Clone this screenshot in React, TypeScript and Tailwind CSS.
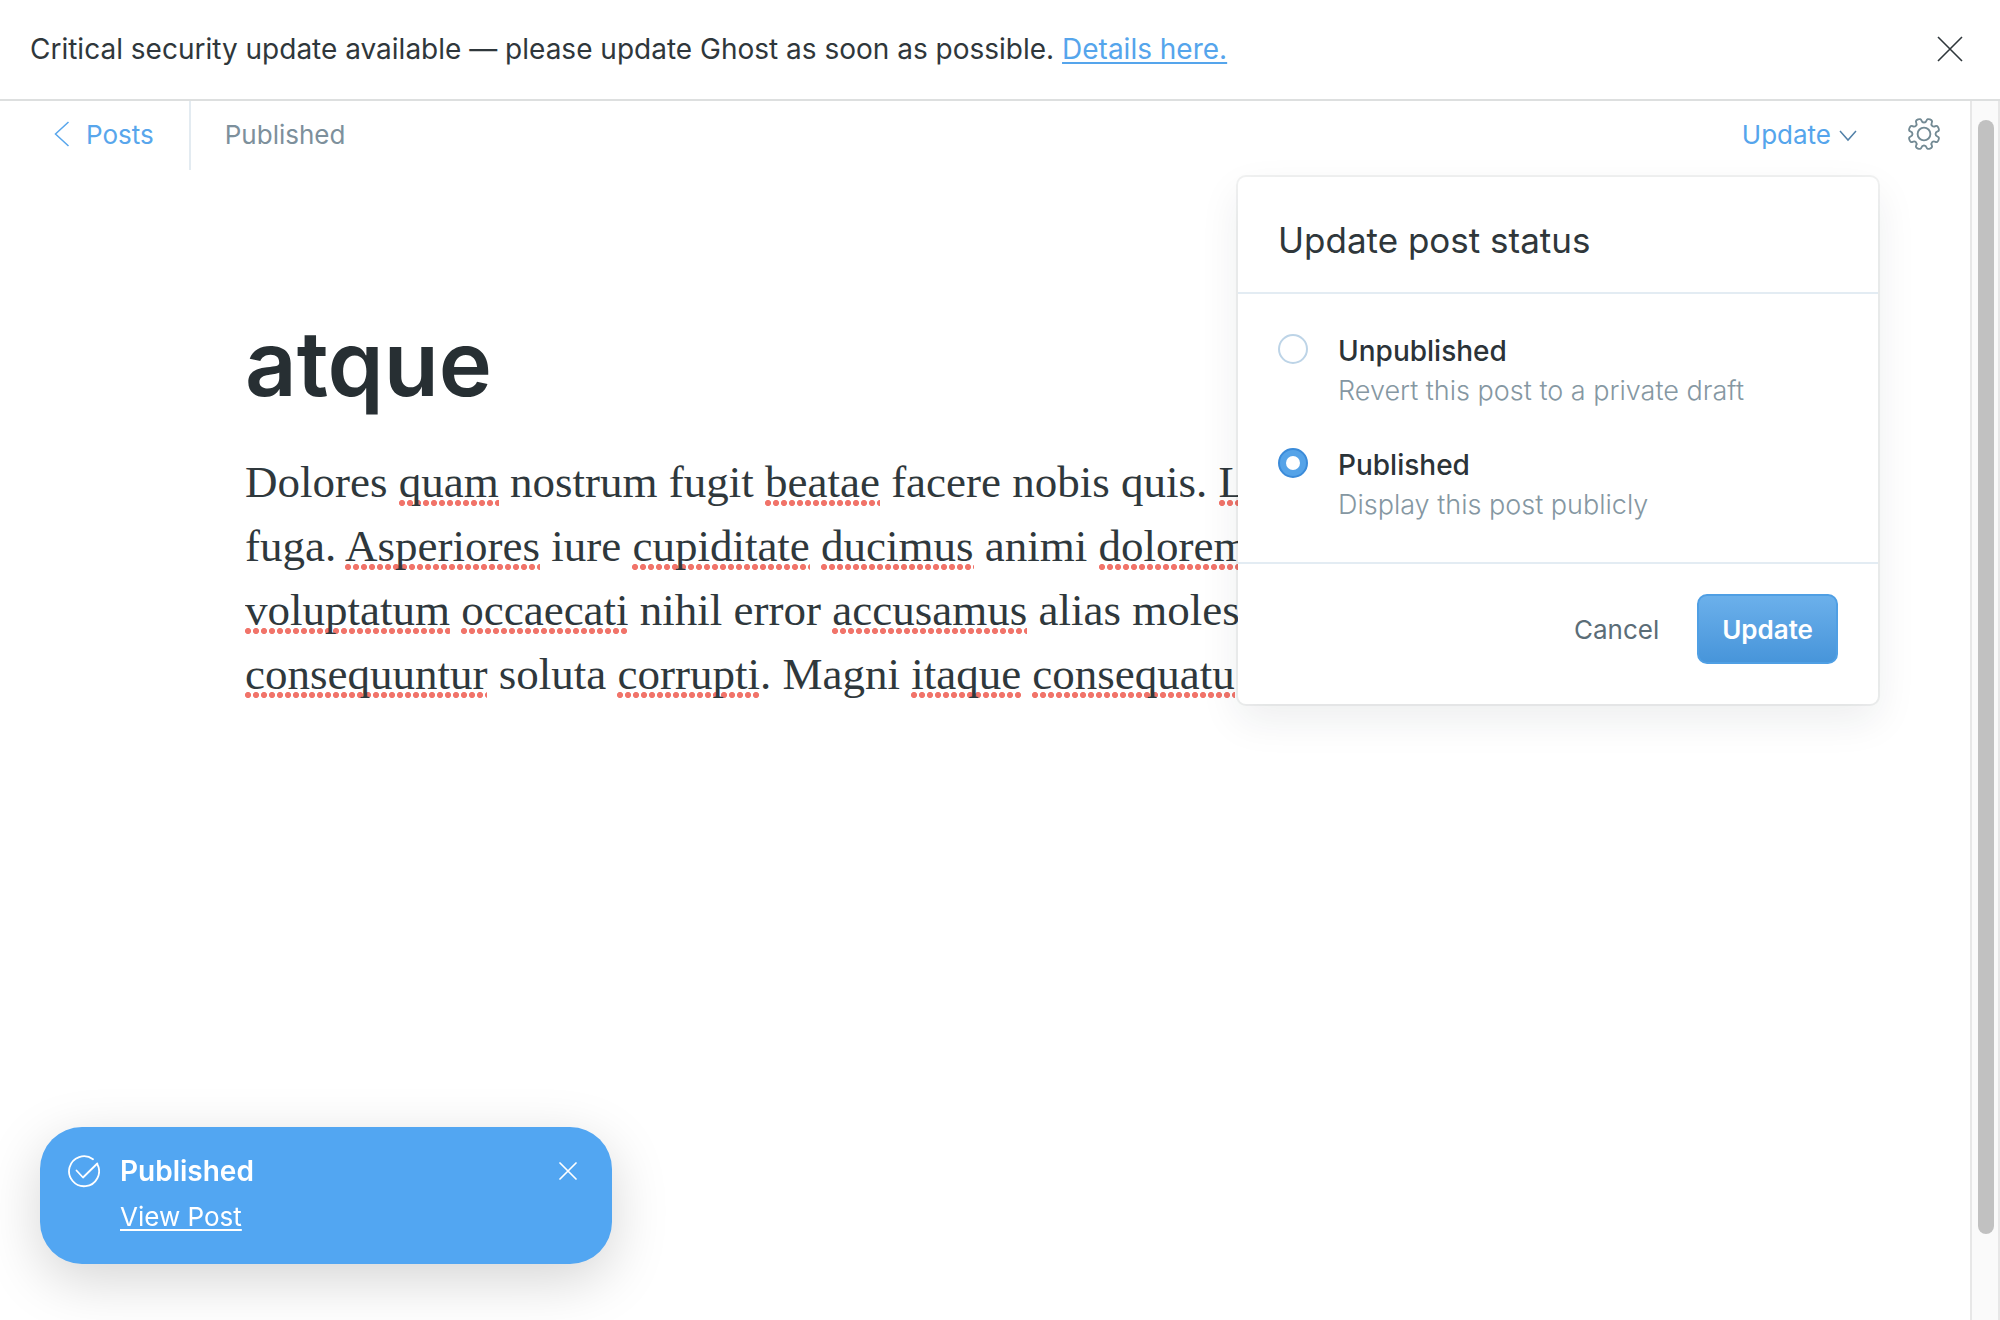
import React, { useState } from "react";

function polar(angle: number, radius: number) {
  const rad = (angle * Math.PI) / 180;
  return [17 + radius * Math.cos(rad), 17 + radius * Math.sin(rad)];
}

// Eight soft teeth: corner points are rounded by running curves between edge midpoints.
function gearPath() {
  const points: number[][] = [];
  for (let i = 0; i < 8; i++) {
    const a = i * 45 + 22.5;
    points.push(polar(a - 11, 17), polar(a + 11, 17), polar(a + 13, 12.4), polar(a + 32, 12.4));
  }
  const mid = (p: number[], q: number[]) => `${((p[0] + q[0]) / 2).toFixed(2)} ${((p[1] + q[1]) / 2).toFixed(2)}`;
  let d = `M${mid(points[points.length - 1], points[0])}`;
  points.forEach((p, i) => {
    d += `Q${p[0].toFixed(2)} ${p[1].toFixed(2)} ${mid(p, points[(i + 1) % points.length])}`;
  });
  return d + "Z";
}

function GearIcon() {
  return (
    <svg width="32" height="32" viewBox="0 0 34 34" fill="none" stroke="#738a94" strokeWidth="2" className="overflow-visible" aria-hidden="true">
      <path d={gearPath()} />
      <circle cx="17" cy="17" r="6.8" />
    </svg>
  );
}

function Misspelled({ children }: { children: React.ReactNode }) {
  return (
    <span className="bg-[radial-gradient(circle_at_3px_3px,#f1746a_2.7px,transparent_3.4px)] bg-[length:8px_7px] bg-[position:0_100%] bg-repeat-x">
      {children}
    </span>
  );
}

type StatusOptionProps = {
  id: string;
  title: string;
  description: string;
  checked: boolean;
  onSelect: () => void;
};

function StatusOption({ id, title, description, checked, onSelect }: StatusOptionProps) {
  return (
    <label htmlFor={id} className="flex cursor-pointer items-start gap-[30px]">
      <input
        id={id}
        type="radio"
        name="post-status"
        checked={checked}
        onChange={onSelect}
        className="mt-[3px] grid size-[30px] shrink-0 cursor-pointer appearance-none place-content-center rounded-full border-2 border-[#bdd4e7] bg-white before:size-3.5 before:rounded-full before:bg-white checked:border-[#3b8bd9] checked:bg-[#55a3e8]"
      />
      <span className="flex flex-col leading-10">
        <span className="text-[28px] font-medium text-[#2b3338]">{title}</span>
        <span className="text-[27px] font-light text-[#8597a2]">{description}</span>
      </span>
    </label>
  );
}

function UpdatePopover() {
  const [status, setStatus] = useState("published");
  return (
    <section
      aria-label="Update post status"
      className="absolute top-[76px] right-[92px] z-10 w-[640px] rounded-lg bg-white shadow-[0_0_0_2px_rgba(60,70,75,0.07),0_16px_40px_rgba(27,39,51,0.08)]"
    >
      <h2 className="border-b-2 border-[#e3ecf3] px-10 pt-10 pb-[29px] text-[35px] leading-[46px] text-[#2f373b]">
        Update post status
      </h2>
      <div role="radiogroup" aria-label="Post status" className="flex flex-col gap-[34px] px-10 py-[37px]">
        <StatusOption
          id="status-unpublished"
          title="Unpublished"
          description="Revert this post to a private draft"
          checked={status === "unpublished"}
          onSelect={() => setStatus("unpublished")}
        />
        <StatusOption
          id="status-published"
          title="Published"
          description="Display this post publicly"
          checked={status === "published"}
          onSelect={() => setStatus("published")}
        />
      </div>
      <div className="flex items-center justify-end gap-[38px] border-t-2 border-[#e3ecf3] px-10 pt-[30px] pb-10 text-[26px]">
        <button type="button" className="text-[#5b6d77]">
          Cancel
        </button>
        <button
          type="button"
          className="h-[70px] rounded-[10px] border-2 border-[#4f9fe4] bg-linear-to-b from-[#6bb0eb] to-[#4795da] px-[23px] font-semibold text-white"
        >
          Update
        </button>
      </div>
    </section>
  );
}

function EditorHeader() {
  return (
    <header className="relative flex h-[66px] items-center text-[26px]">
      <a href="#posts" className="flex items-center gap-4 pl-[54px] text-[#58a6ec]">
        <svg width="16" height="26" viewBox="0 0 16 26" fill="none" stroke="currentColor" strokeWidth="1.5" aria-hidden="true">
          <path d="M14.5 1 1.5 13l13 12" />
        </svg>
        Posts
      </a>
      <div className="ml-[35px] h-[69px] w-0.5 self-start bg-[#e3ebf1]" />
      <span className="ml-[34px] text-[#7d909c]">Published</span>
      <button type="button" className="ml-auto flex items-center gap-2 text-[#55a5ec]" aria-expanded="true">
        <span>Update</span>
        <svg width="18" height="12" viewBox="0 0 18 12" fill="none" stroke="#5180a8" strokeWidth="1.5" className="mt-1" aria-hidden="true">
          <path d="m1 1 8 9 8-9" />
        </svg>
      </button>
      <button type="button" className="mr-[30px] ml-[51px]" aria-label="Post settings">
        <GearIcon />
      </button>
      <UpdatePopover />
    </header>
  );
}

function Editor() {
  return (
    <article className="mx-auto w-full max-w-[1480px] pt-[142px]">
      <h1 className="text-[90px] leading-[110px] font-semibold text-[#272f33]">atque</h1>
      <p className="mt-[31px] overflow-hidden font-['Liberation_Serif',serif] text-[45px] leading-[64px] whitespace-nowrap text-[#2f383c]">
        Dolores <Misspelled>quam</Misspelled> nostrum fugit <Misspelled>beatae</Misspelled> facere nobis quis.{" "}
        <Misspelled>La</Misspelled>
        <br />
        fuga. <Misspelled>Asperiores</Misspelled> iure <Misspelled>cupiditate</Misspelled>{" "}
        <Misspelled>ducimus</Misspelled> animi <Misspelled>dolorem</Misspelled>
        <br />
        <Misspelled>voluptatum</Misspelled> <Misspelled>occaecati</Misspelled> nihil error{" "}
        <Misspelled>accusamus</Misspelled> alias molest
        <br />
        <Misspelled>consequuntur</Misspelled> soluta <Misspelled>corrupti</Misspelled>. Magni{" "}
        <Misspelled>itaque</Misspelled> <Misspelled>consequatu</Misspelled>
      </p>
    </article>
  );
}

function Toast() {
  return (
    <aside
      role="status"
      className="fixed bottom-14 left-10 flex w-[572px] items-start rounded-[42px] bg-[#52a6f2] pt-[26px] pr-[35px] pb-[29px] pl-7 text-white shadow-[0_16px_56px_rgba(0,0,0,0.17)]"
    >
      <svg width="32" height="36" viewBox="0 0 32 36" fill="none" stroke="currentColor" strokeWidth="1.8" strokeLinecap="round" strokeLinejoin="round" aria-hidden="true">
        <path d="M25 6.2A15 15 0 1 0 29.3 11.2" />
        <path d="M8.5 17.5 15 24.5 29.3 10.5" />
      </svg>
      <div className="ml-5 flex grow flex-col items-start gap-2.5 leading-9">
        <span className="text-[28px] font-semibold">Published</span>
        <a href="#view" className="text-[26px] underline decoration-2 underline-offset-3">
          View Post
        </a>
      </div>
      <button type="button" className="flex h-9 items-center" aria-label="Dismiss notification">
        <svg width="18" height="18" viewBox="0 0 18 18" fill="none" stroke="currentColor" strokeWidth="1.7" strokeLinecap="round" aria-hidden="true">
          <path d="m1 1 16 16M17 1 1 17" />
        </svg>
      </button>
    </aside>
  );
}

export default function App() {
  return (
    <div className="flex h-screen flex-col bg-white font-['Inter',sans-serif]">
      <div className="flex shrink-0 items-center justify-between border-b-2 border-[#dddfdf] pr-[37px] pl-[30px] text-[28px] leading-[99px] text-[#2f373b]">
        <p>
          Critical security update available — please update Ghost as soon as possible.{" "}
          <a href="#details" className="text-[#55a5ec] underline decoration-2 underline-offset-3">
            Details here.
          </a>
        </p>
        <button type="button" aria-label="Close" className="pb-0.5">
          <svg width="26" height="26" viewBox="0 0 26 26" fill="none" stroke="#2f373b" strokeWidth="1.6" aria-hidden="true">
            <path d="m1 1 24 24M25 1 1 25" />
          </svg>
        </button>
      </div>
      <div className="flex min-h-0 grow">
        <main className="min-w-0 grow">
          <EditorHeader />
          <Editor />
        </main>
        <div aria-hidden="true" className="flex w-[30px] shrink-0 border-x-2 border-[#e7e7e7] bg-[#fafafa] pt-[19px] pb-[86px] pl-1.5">
          <div className="w-4 rounded-full bg-[#c1c1c1]" />
        </div>
      </div>
      <Toast />
    </div>
  );
}
